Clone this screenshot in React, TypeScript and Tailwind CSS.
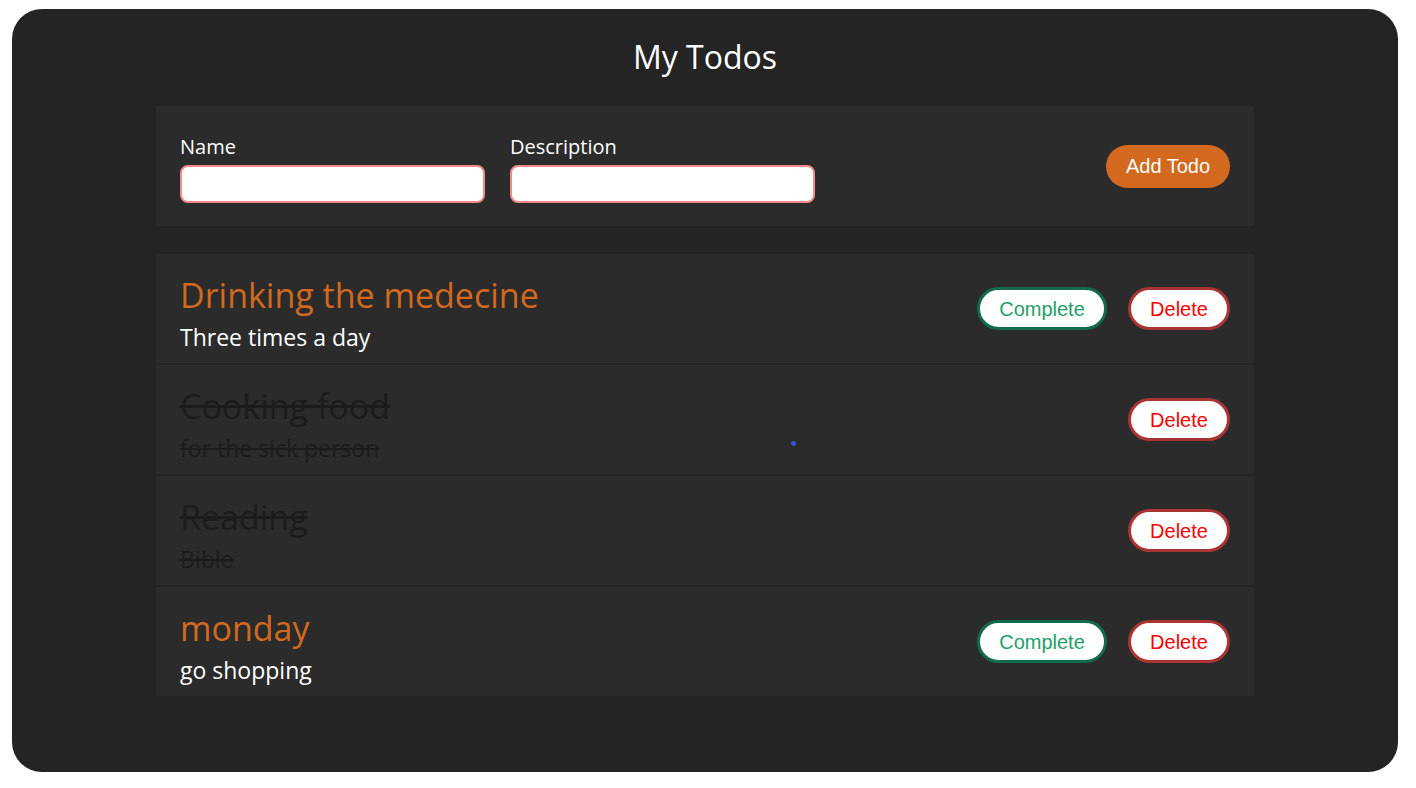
import React, { useState } from "react";

interface Todo {
  id: number;
  name: string;
  description: string;
  done: boolean;
}

const initialTodos: Todo[] = [
  { id: 1, name: "Drinking the medecine", description: "Three times a day", done: false },
  { id: 2, name: "Cooking food", description: "for the sick person", done: true },
  { id: 3, name: "Reading", description: "Bible", done: true },
  { id: 4, name: "monday", description: "go shopping", done: false },
];

export default function App() {
  const [todos, setTodos] = useState<Todo[]>(initialTodos);
  const [name, setName] = useState("");
  const [description, setDescription] = useState("");

  const addTodo = () => {
    if (!name.trim()) return;
    setTodos([...todos, { id: Date.now(), name, description, done: false }]);
    setName("");
    setDescription("");
  };

  return (
    <div className="min-h-screen bg-white pt-[9px] pl-[12px] font-['Open_Sans',sans-serif]">
      <div className="relative w-[1386px] h-[763px] rounded-[30px] bg-[#242424] flex flex-col items-center">
        <h1 className="mt-[27px] text-[32px] leading-[42px] text-white">My Todos</h1>

        {/* form */}
        <div className="mt-[28px] w-[1098px] h-[120px] bg-[#2b2b2b] px-[24px] flex items-center justify-between">
          <div className="flex gap-[25px] pt-[4px]">
            <Field label="Name" value={name} onChange={setName} />
            <Field label="Description" value={description} onChange={setDescription} />
          </div>
          <button
            onClick={addTodo}
            className="w-[124px] h-[43px] rounded-full bg-[#d2691e] text-white text-[20px] font-['Liberation_Sans',Arial,sans-serif]"
          >
            Add Todo
          </button>
        </div>

        {/* list */}
        <div className="mt-[28px] w-[1098px] flex flex-col gap-[2px]">
          {todos.map((t) => (
            <div key={t.id} className="h-[109px] bg-[#2b2b2b] px-[24px] flex items-center justify-between">
              <div className={`self-start pt-[17px] flex flex-col ${t.done ? "line-through text-[#1c1c1c]" : ""}`}>
                <span className={`text-[34px] leading-[48px] ${t.done ? "" : "text-[#d2691e]"}`}>{t.name}</span>
                <span className={`mt-[2px] text-[23px] leading-[32px] ${t.done ? "" : "text-white"}`}>{t.description}</span>
              </div>
              <div className="flex gap-[21px] font-['Liberation_Sans',Arial,sans-serif] text-[20px]">
                {!t.done && (
                  <button
                    onClick={() => setTodos(todos.map((x) => (x.id === t.id ? { ...x, done: true } : x)))}
                    className="w-[130px] h-[43px] rounded-full bg-white border-[3px] border-[#136a4c] text-[#23a06a]"
                  >
                    Complete
                  </button>
                )}
                <button
                  onClick={() => setTodos(todos.filter((x) => x.id !== t.id))}
                  className="w-[102px] h-[43px] rounded-full bg-white border-[3px] border-[#a93434] text-[#ff0000]"
                >
                  Delete
                </button>
              </div>
            </div>
          ))}
        </div>

        {/* cursor dot */}
        <span className="absolute left-[779px] top-[432px] w-[5px] h-[5px] rounded-full bg-[#3b4fd8]" />
      </div>
    </div>
  );
}

function Field({ label, value, onChange }: { label: string; value: string; onChange: (v: string) => void }) {
  return (
    <label className="flex flex-col">
      <span className="text-[20px] leading-[26px] text-white mb-[5px]">{label}</span>
      <input
        value={value}
        onChange={(e) => onChange(e.target.value)}
        className="w-[305px] h-[38px] rounded-[8px] bg-white border-2 border-[#f38b8b] outline-none px-2"
      />
    </label>
  );
}
